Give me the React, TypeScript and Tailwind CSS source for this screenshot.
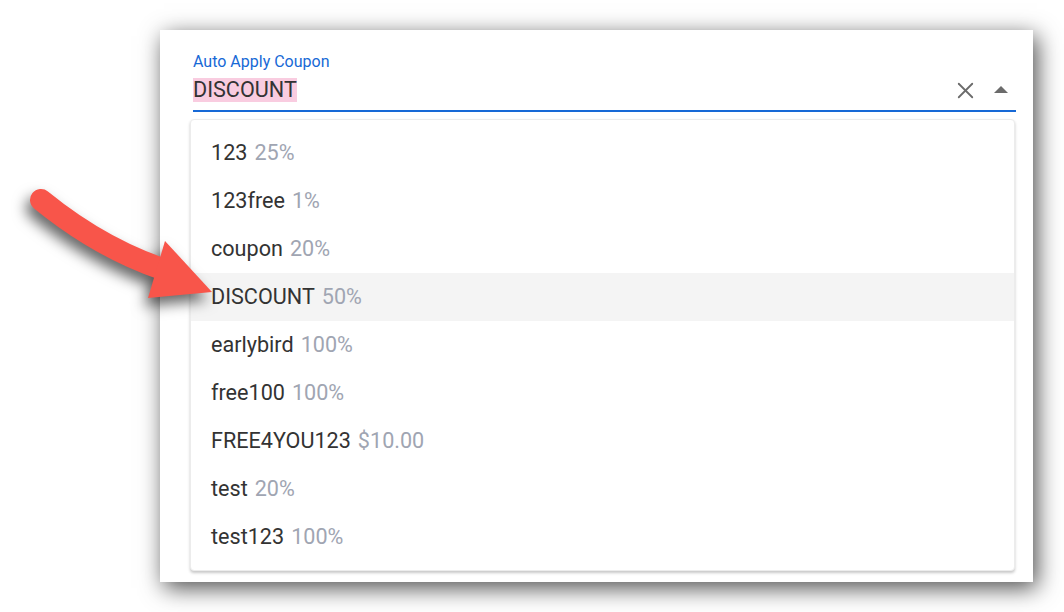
import { X } from "lucide-react";

const coupons = [
  { code: "123", value: "25%" },
  { code: "123free", value: "1%" },
  { code: "coupon", value: "20%" },
  { code: "DISCOUNT", value: "50%" },
  { code: "earlybird", value: "100%" },
  { code: "free100", value: "100%" },
  { code: "FREE4YOU123", value: "$10.00" },
  { code: "test", value: "20%" },
  { code: "test123", value: "100%" },
];

function PointerArrow() {
  return (
    <svg
      className="absolute left-0 top-0 pointer-events-none"
      width={260}
      height={340}
      viewBox="0 0 260 340"
      style={{ filter: "drop-shadow(-4px 8px 7px rgba(0,0,0,0.6))" }}
    >
      <path
        d="M41 200 Q106 253 178 274"
        fill="none"
        stroke="#f8554a"
        strokeWidth={22}
        strokeLinecap="round"
      />
      <polygon points="165,241 212,292 148,298" fill="#f8554a" />
    </svg>
  );
}

export default function App() {
  return (
    <div
      className="relative w-[1064px] h-[612px] bg-white overflow-hidden"
      style={{ fontFamily: "Roboto, 'Noto Sans', sans-serif" }}
    >
      {/* main card */}
      <div className="ml-[160px] mt-[30px] w-[873px] h-[552px] bg-white shadow-[4px_6px_22px_rgba(0,0,0,0.7)] pt-[24px] pl-[33px] pr-[17px]">
        <div className="text-[16px] leading-[16px] text-[#1769d6]">Auto Apply Coupon</div>

        {/* input row */}
        <div className="flex items-center h-[42px] pt-[9px] pb-[9px] border-b-2 border-[#1769d6]">
          <span className="bg-[#f9cce0] text-[21.6px] leading-[24px] text-[#333333]">DISCOUNT</span>
          <div className="ml-auto flex items-center gap-[15px] pr-[8px]">
            <X size={27} strokeWidth={1.6} className="text-[#6b6b6b]" />
            <svg width={14} height={8} viewBox="0 0 14 8">
              <polygon points="0,7 7,0 14,7" fill="#6b6b6b" />
            </svg>
          </div>
        </div>

        {/* dropdown */}
        <div className="-ml-[3px] mt-[7px] w-[825px] bg-white rounded-[4px] border border-[#ececec] shadow-[0_2px_3px_rgba(0,0,0,0.22)] py-[9px]">
          {coupons.map((c) => (
            <div
              key={c.code}
              className={`h-[48px] flex items-center pl-[20px] text-[21.6px] ${
                c.code === "DISCOUNT" ? "bg-[#f4f4f4]" : ""
              }`}
            >
              <span className="text-[#333333]">{c.code}</span>
              <span className="ml-[7px] text-[#a0a5b2]">{c.value}</span>
            </div>
          ))}
        </div>
      </div>

      <PointerArrow />
    </div>
  );
}
